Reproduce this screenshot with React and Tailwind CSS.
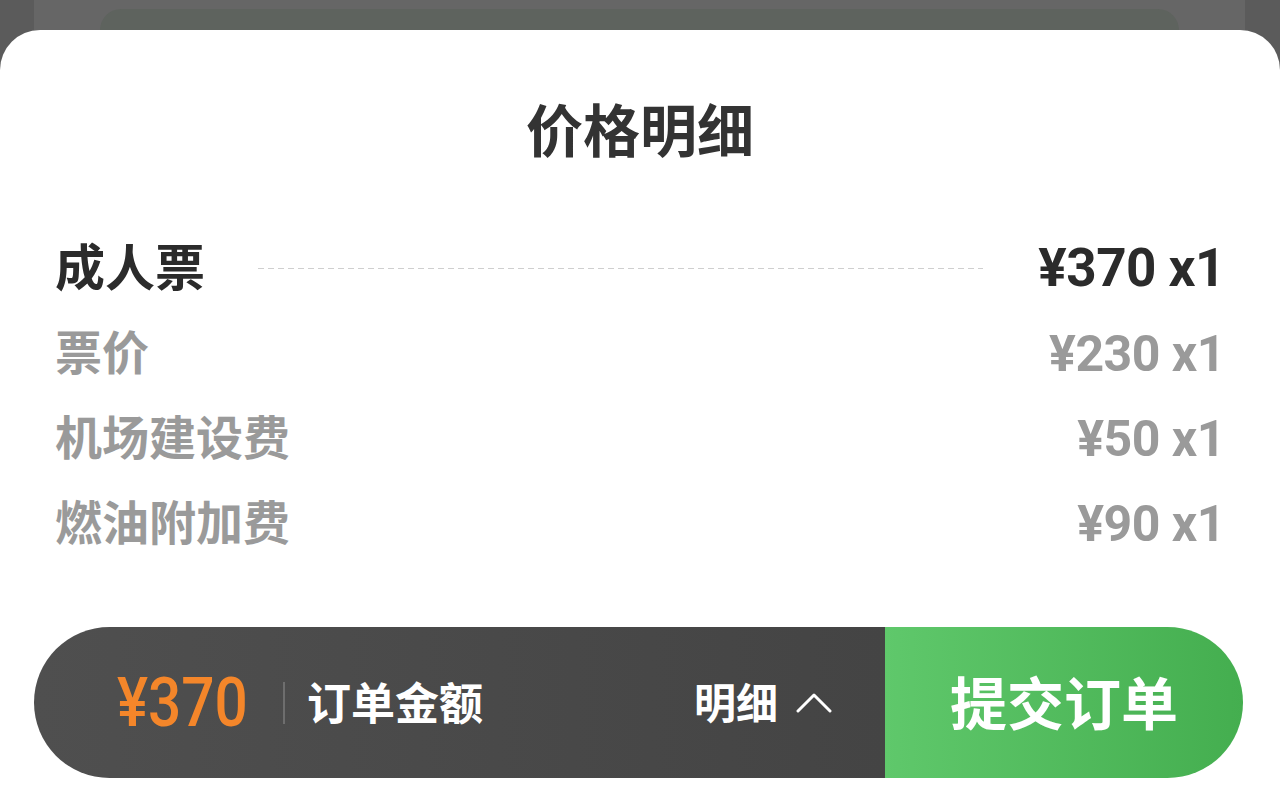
import React from "react";

const cjk = "font-['Noto_Sans_CJK_SC','Noto_Sans',sans-serif]";
const num = "font-['Roboto','Noto_Sans_CJK_SC',sans-serif]";

function Row({ label, price, strong }) {
  return (
    <div className="flex h-[85px] items-center">
      <span
        className={`${cjk} block pb-[9px] font-bold leading-none ${
          strong ? "text-[50px] text-[#2b2b2b]" : "text-[47px] text-[#9a9a9a]"
        }`}
      >
        {label}
      </span>
      {strong ? (
        <div className="ml-[53px] mr-[55px] h-px flex-1 bg-[repeating-linear-gradient(to_right,#cfcfcf_0,#cfcfcf_6px,transparent_6px,transparent_10px)]" />
      ) : (
        <div className="flex-1" />
      )}
      <span
        className={`${num} font-bold leading-none tracking-[-0.5px] ${
          strong ? "text-[53px] text-[#2b2b2b]" : "text-[50px] text-[#9a9a9a]"
        }`}
      >
        {price}
      </span>
    </div>
  );
}

export default function App() {
  return (
    <div className="flex h-[786px] w-[1280px] flex-col overflow-hidden bg-[#5b5b5b]">
      {/* top backdrop */}
      <div className="flex h-[30px] shrink-0">
        <div className="w-[34px] bg-[#5b5b5b]" />
        <div className="flex flex-1 bg-[#666666] px-[66px]">
          <div className="mt-[9px] flex-1 rounded-t-[44px] bg-[#5e635e]" />
        </div>
        <div className="w-[35px] bg-[#5b5b5b]" />
      </div>

      {/* white sheet */}
      <div className="flex flex-1 flex-col rounded-t-[40px] bg-white">
        <div className={`${cjk} pt-[63px] text-center text-[57px] font-bold leading-[68px] text-[#333333]`}>
          价格明细
        </div>

        <div className="mt-[65px] flex flex-col pl-[55px] pr-[55px]">
          <Row label="成人票" price="¥370 x1" strong />
          <Row label="票价" price="¥230 x1" />
          <Row label="机场建设费" price="¥50 x1" />
          <Row label="燃油附加费" price="¥90 x1" />
        </div>

        {/* bottom bar */}
        <div className="ml-[34px] mr-[37px] mt-[61px] flex h-[151px] overflow-hidden rounded-full">
          <div className="flex w-[851px] items-center justify-between bg-gradient-to-r from-[#4f4f4f] to-[#444444] pl-[83px] pr-[53px]">
            <div className="flex items-center">
              <span className={`${num} inline-block w-[130px] origin-left scale-x-[0.86] text-[68px] font-medium leading-none text-[#f4862a]`}>
                ¥370
              </span>
              <div className="ml-[36px] h-[42px] w-[2px] bg-[#6e6e6e]" />
              <span className={`${cjk} ml-[22px] pb-[4px] text-[44px] font-bold leading-none text-white`}>
                订单金额
              </span>
            </div>
            <div className="flex items-center">
              <span className={`${cjk} pb-[4px] text-[42px] font-bold leading-none text-white`}>明细</span>
              <svg className="ml-[18px]" width="36" height="20" viewBox="0 0 36 20" fill="none">
                <polyline points="2,18 18,2 34,18" stroke="white" strokeWidth="3" strokeLinecap="round" strokeLinejoin="round" />
              </svg>
            </div>
          </div>
          <div className="flex flex-1 items-center justify-center bg-gradient-to-r from-[#5fc86b] to-[#44ae4f]">
            <span className={`${cjk} pb-[4px] text-[57px] font-bold leading-none text-white`}>提交订单</span>
          </div>
        </div>
      </div>
    </div>
  );
}
